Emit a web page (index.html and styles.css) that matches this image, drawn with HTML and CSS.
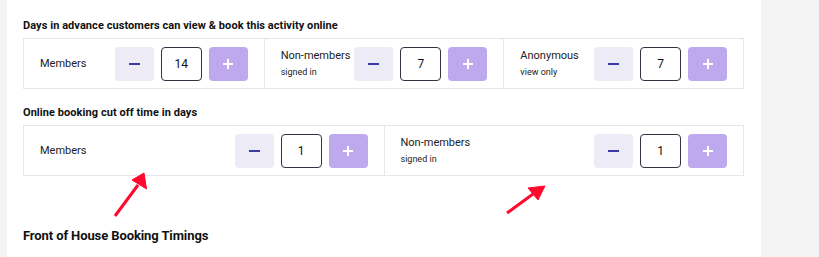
FILE: index.html
```html
<!DOCTYPE html>
<html>
<head>
<meta charset="utf-8">
<link rel="stylesheet" href="styles.css">
</head>
<body>
<div class="page">
  <div class="gutter"></div>
  <main class="main">
    <h3 class="section-title first">Days in advance customers can view &amp; book this activity online</h3>
    <div class="box three">
      <div class="cell">
        <div class="label"><div class="name">Members</div></div>
        <div class="stepper">
          <button class="btn minus"><span class="minus-bar"></span></button>
          <div class="value">14</div>
          <button class="btn plus"><span class="plus-h"></span><span class="plus-v"></span></button>
        </div>
      </div>
      <div class="cell">
        <div class="label"><div class="name">Non-members</div><div class="sub">signed in</div></div>
        <div class="stepper">
          <button class="btn minus"><span class="minus-bar"></span></button>
          <div class="value">7</div>
          <button class="btn plus"><span class="plus-h"></span><span class="plus-v"></span></button>
        </div>
      </div>
      <div class="cell">
        <div class="label"><div class="name">Anonymous</div><div class="sub">view only</div></div>
        <div class="stepper">
          <button class="btn minus"><span class="minus-bar"></span></button>
          <div class="value">7</div>
          <button class="btn plus"><span class="plus-h"></span><span class="plus-v"></span></button>
        </div>
      </div>
    </div>

    <h3 class="section-title second">Online booking cut off time in days</h3>
    <div class="box two">
      <div class="cell">
        <div class="label"><div class="name">Members</div></div>
        <div class="stepper">
          <button class="btn minus"><span class="minus-bar"></span></button>
          <div class="value">1</div>
          <button class="btn plus"><span class="plus-h"></span><span class="plus-v"></span></button>
        </div>
      </div>
      <div class="cell">
        <div class="label"><div class="name">Non-members</div><div class="sub">signed in</div></div>
        <div class="stepper">
          <button class="btn minus"><span class="minus-bar"></span></button>
          <div class="value">1</div>
          <button class="btn plus"><span class="plus-h"></span><span class="plus-v"></span></button>
        </div>
      </div>
    </div>

    <h2 class="big-title">Front of House Booking Timings</h2>

    <svg class="annot" width="754" height="257" viewBox="0 0 754 257">
      <g fill="#ff0a2e" stroke="#ff0a2e">
        <line x1="108" y1="216" x2="131" y2="185" stroke-width="3"/>
        <polygon points="137,173 139.5,189 125,180" stroke-width="1"/>
        <line x1="500" y1="213" x2="526" y2="194" stroke-width="3"/>
        <polygon points="538,186 531,200 521,188" stroke-width="1"/>
      </g>
    </svg>
  </main>
  <div class="side"></div>
</div>
</body>
</html>
```

FILE: styles.css
```css
* { box-sizing: border-box; }
html, body { margin: 0; padding: 0; }
body {
  font-family: Roboto, "Liberation Sans", Arial, sans-serif;
  color: #1c1c1c;
  background: #f4f4f5;
  width: 819px;
  height: 257px;
  overflow: hidden;
}
.page {
  display: flex;
  height: 257px;
}
.gutter {
  width: 7px;
  background: #f4f4f5;
  flex: none;
}
.main {
  position: relative;
  width: 754px;
  flex: none;
  background: #fff;
  padding: 19px 17px 0 16px;
}
.side {
  flex: 1;
  background: #f4f4f5;
}
.section-title {
  margin: 0;
  font-size: 11px;
  line-height: 14px;
  font-weight: 700;
  color: #111;
  letter-spacing: 0.06px;
}
.section-title.first { margin-bottom: 5px; }
.section-title.second { margin-top: 17px; margin-bottom: 5px; }
.box {
  display: grid;
  border: 1px solid #e7e7eb;
  height: 51px;
}
.box.three { grid-template-columns: 1fr 1fr 1fr; }
.box.two { grid-template-columns: 1fr 1fr; }
.cell {
  display: flex;
  align-items: center;
  justify-content: space-between;
  padding: 0 16px 0 16px;
}
.cell + .cell { border-left: 1px solid #e7e7eb; }
.label .name {
  font-size: 11px;
  line-height: 16px;
  color: #222;
}
.label .sub {
  font-size: 9px;
  line-height: 16px;
  color: #222;
}
.stepper {
  display: flex;
  align-items: center;
  gap: 7px;
}
.btn {
  width: 39px;
  height: 34px;
  border: none;
  border-radius: 4px;
  padding: 0;
  position: relative;
  display: flex;
  align-items: center;
  justify-content: center;
}
.btn.minus { background: #ecebf6; }
.btn.plus { background: #bea9ee; }
.minus-bar {
  display: block;
  width: 11px;
  height: 2px;
  background: #3a3aa8;
}
.plus-h, .plus-v {
  position: absolute;
  background: #fff;
  left: 50%;
  top: 50%;
}
.plus-h { width: 10px; height: 2px; margin-left: -5px; margin-top: -1px; }
.plus-v { width: 2px; height: 10px; margin-left: -1px; margin-top: -5px; }
.value {
  width: 41px;
  height: 34px;
  border: 1px solid #2e3440;
  border-radius: 4px;
  display: flex;
  align-items: center;
  justify-content: center;
  font-size: 12px;
  color: #111;
}
.big-title {
  margin: 51px 0 0 0;
  font-size: 13px;
  line-height: 18px;
  font-weight: 700;
  color: #111;
  letter-spacing: -0.1px;
}
.annot {
  position: absolute;
  left: 0;
  top: 0;
  pointer-events: none;
}
```
